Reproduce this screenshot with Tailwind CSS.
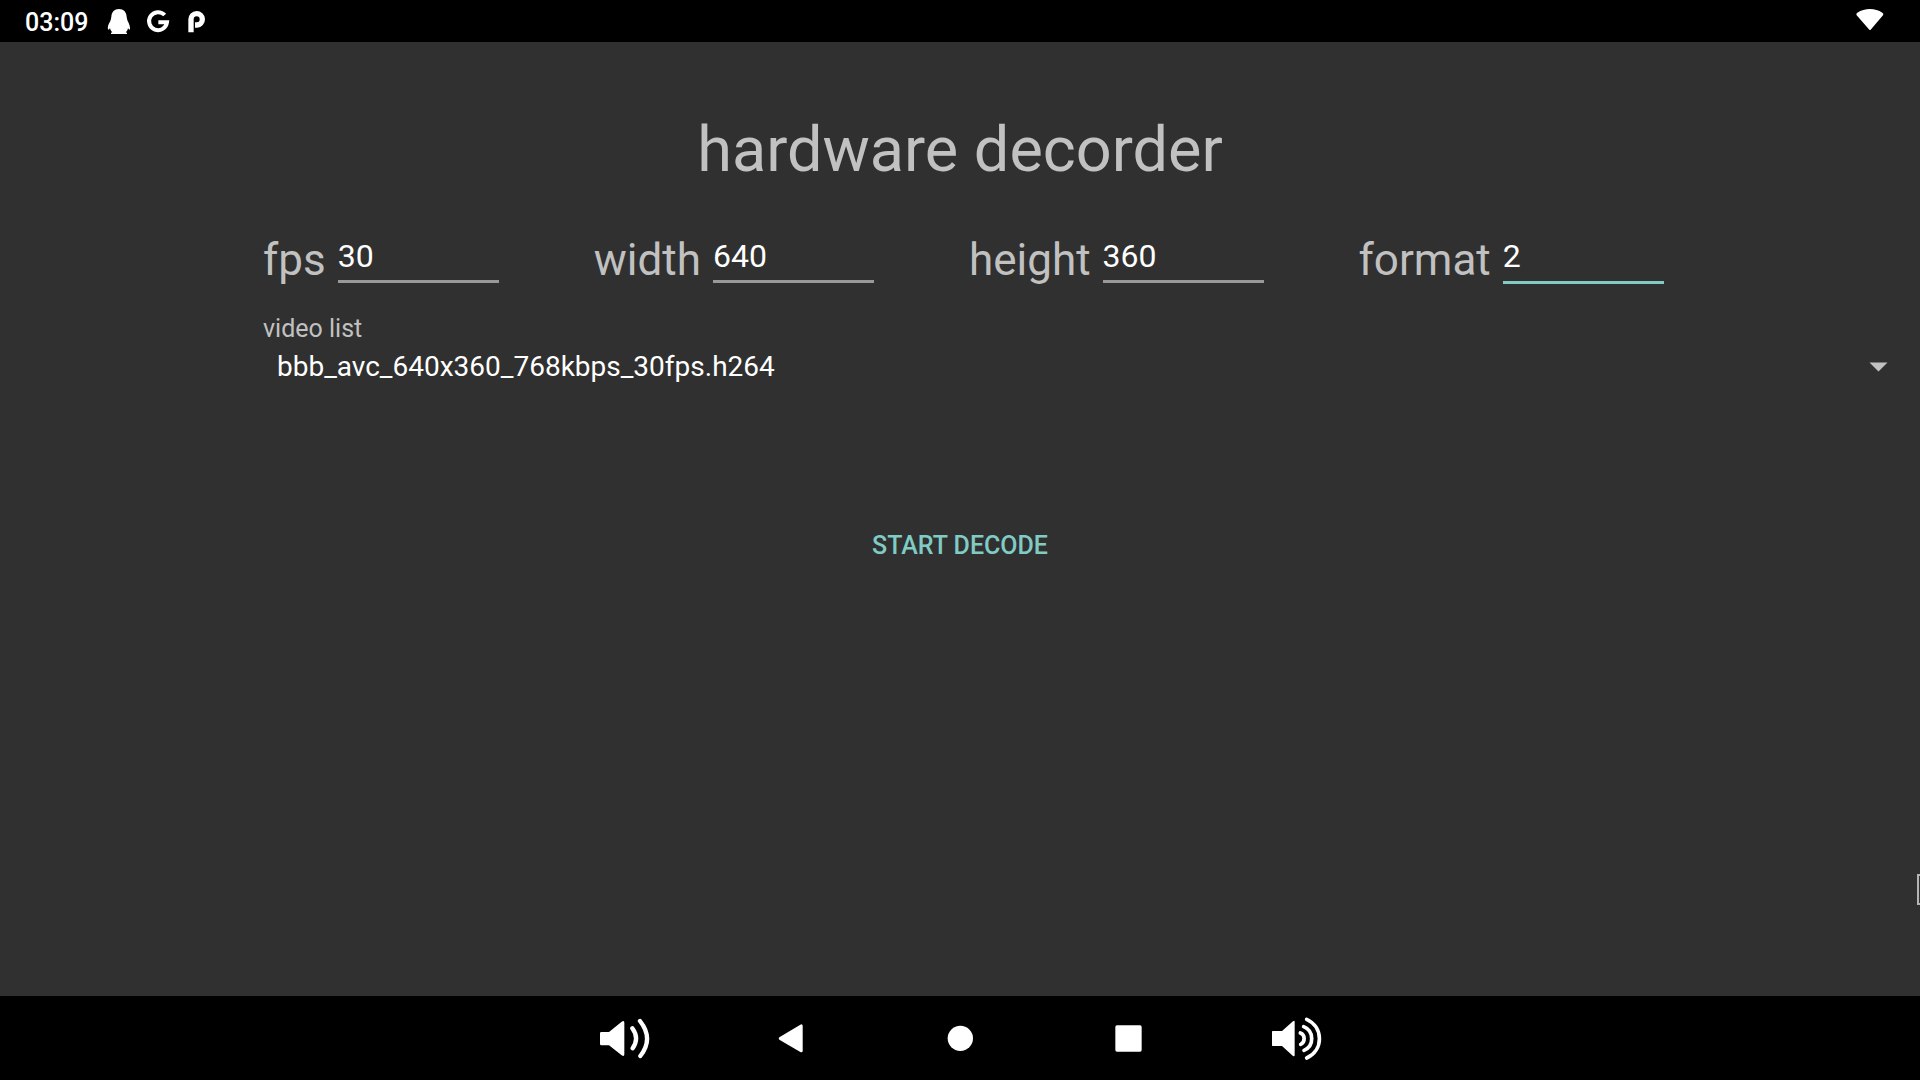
<!DOCTYPE html>
<html lang="en">
<head>
<meta charset="utf-8">
<meta name="viewport" content="width=device-width, initial-scale=1">
<title>hardware decorder</title>
<script src="https://cdn.jsdelivr.net/npm/@tailwindcss/browser@4"></script>
</head>
<body class="relative flex min-h-screen flex-col overflow-x-hidden bg-[#303030] font-[Roboto,sans-serif] text-[#c1c1c1]">

<!-- Status bar -->
<header class="flex h-[42px] items-center bg-black pr-9 pl-[25px] text-white">
  <time class="pt-1 text-[25px] leading-7 font-medium">03:09</time>
  <svg class="ml-[15px] h-[42px] w-[32px]" viewBox="0 0 96 126" fill="currentColor" aria-label="QQ">
    <path d="M48 27C34 27 26 36 25 50C24 57 23 61 20 67C16 74 13 82 15 88C18 90 20 87 21 84C22 90 25 94 28 97L24 98V102H72V98L68 97C72 94 74 90 75 84C76 87 79 90 81 88C82 82 79 74 76 67C73 61 72 57 71 50C70 36 62 27 48 27Z"/>
  </svg>
  <svg class="ml-[7px] h-[42px] w-[32px]" viewBox="0 0 96 126" fill="none" stroke="currentColor" stroke-width="12" aria-label="Google">
    <path d="M68 45A27 27 0 1 0 75 67H49"/>
  </svg>
  <svg class="ml-[7px] h-[42px] w-[32px]" viewBox="0 0 96 126" fill="none" stroke="currentColor" stroke-width="16" aria-label="P">
    <path d="M30 97V58A17 17 0 1 1 48 75H42"/>
  </svg>
  <svg class="ml-auto h-[42px] w-[28px]" viewBox="0 0 84 126" fill="currentColor" aria-label="Wi-Fi">
    <path d="M1 43C1 41 2 39 4 38C26 23 58 23 79 38C81 39 82 41 82 43L81 46L44 89Q42 91 40 89L2 46Z"/>
  </svg>
</header>

<main class="flex grow flex-col pt-[71px]">
  <h1 class="text-center text-[63px] leading-[74px]">hardware decorder</h1>

  <form class="mt-[47px] flex flex-col">
    <div class="flex gap-x-[95px] pl-[263px]">
      <div class="flex items-start gap-3">
        <label for="fps" class="text-[44px] leading-[52px]">fps</label>
        <input id="fps" value="30" class="mt-1 h-[45px] w-[161px] border-b-3 border-[#999] pb-[6px] text-[32px] leading-9 text-white outline-none">
      </div>
      <div class="flex items-start gap-3">
        <label for="width" class="text-[44px] leading-[52px]">width</label>
        <input id="width" value="640" class="mt-1 h-[45px] w-[161px] border-b-3 border-[#999] pb-[6px] text-[32px] leading-9 text-white outline-none">
      </div>
      <div class="flex items-start gap-3">
        <label for="height" class="text-[44px] leading-[52px]">height</label>
        <input id="height" value="360" class="mt-1 h-[45px] w-[161px] border-b-3 border-[#999] pb-[6px] text-[32px] leading-9 text-white outline-none">
      </div>
      <div class="flex items-start gap-3">
        <label for="format" class="text-[44px] leading-[52px]">format</label>
        <input id="format" value="2" class="mt-1 h-[46px] w-[161px] border-b-3 border-[#80cbc4] pb-[7px] text-[32px] leading-9 text-white outline-none">
      </div>
    </div>

    <label for="video" class="mt-[29px] pl-[263px] text-[25px] leading-7">video list</label>
    <div class="mt-2 flex items-center pr-8 pl-[263px]">
      <select id="video" class="h-8 grow appearance-none bg-transparent pl-[14px] text-[28px] leading-8 text-white outline-none">
        <option>bbb_avc_640x360_768kbps_30fps.h264</option>
      </select>
      <svg class="h-[10px] w-[19px]" viewBox="0 0 19 10" fill="currentColor" aria-hidden="true"><path d="M0.5 0.5H18.5L9.5 9.5Z"/></svg>
    </div>

    <button type="button" class="mt-[133px] self-center px-4 py-4 text-[25px] leading-7 font-medium text-[#80cbc4]">START DECODE</button>
  </form>
</main>

<!-- Focus frame peeking in from the right edge -->
<div class="absolute top-[874px] right-0 h-[31px] w-[3px] border-2 border-r-0 border-[#b4b4b4]"></div>

<!-- Navigation bar -->
<nav class="flex h-[84px] items-center justify-center bg-black text-white">
  <button type="button" aria-label="Volume down" class="flex w-[168px] justify-center">
    <svg class="size-[60px]" viewBox="0 0 180 180" fill="currentColor">
      <path d="M22 72H45L83 41Q91 36 91 44V139Q91 147 83 142L45 112H22Q18 112 18 108V76Q18 72 22 72Z"/>
      <path d="M115 61Q137 91 116 121M138 39Q180 92 139 144" fill="none" stroke="currentColor" stroke-width="13" stroke-linecap="round"/>
    </svg>
  </button>
  <button type="button" aria-label="Back" class="flex w-[168px] justify-center">
    <svg class="size-[60px]" viewBox="0 0 180 180" fill="currentColor"><path d="M52 88L115 50Q122 47 122 54V128Q122 135 115 132L52 95Q48 91 52 88Z"/></svg>
  </button>
  <button type="button" aria-label="Home" class="flex w-[168px] justify-center">
    <svg class="size-[60px]" viewBox="0 0 180 180" fill="currentColor"><circle cx="91" cy="91" r="38"/></svg>
  </button>
  <button type="button" aria-label="Recent apps" class="flex w-[168px] justify-center">
    <svg class="size-[60px]" viewBox="0 0 180 180" fill="currentColor"><rect x="52" y="52" width="79" height="79" rx="5"/></svg>
  </button>
  <button type="button" aria-label="Volume up" class="flex w-[168px] justify-center">
    <svg class="size-[60px]" viewBox="0 0 180 180" fill="currentColor">
      <path d="M20 69H48L81 40Q86 36 86 42V141Q86 147 81 144L48 114H20Q18 114 18 112V71Q18 69 20 69Z"/>
      <path d="M103 75C118 80 118 103 104 109M113 56C145 69 145 114 114 127M122 34C173 57 173 127 122 150" fill="none" stroke="currentColor" stroke-width="11" stroke-linecap="round"/>
    </svg>
  </button>
</nav>
</body>
</html>
